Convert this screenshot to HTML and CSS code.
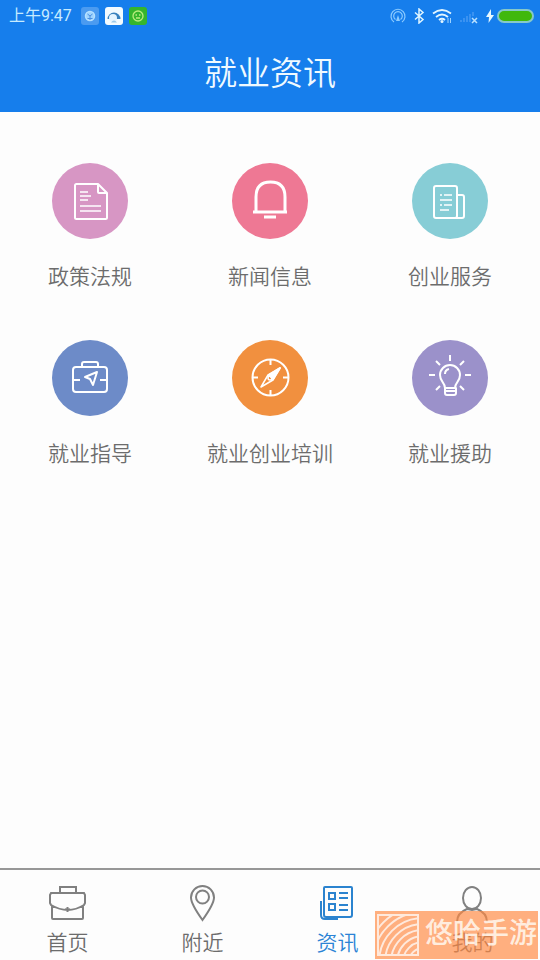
FILE: index.html
```html
<!DOCTYPE html>
<html lang="zh-CN">
<head>
<meta charset="utf-8">
<meta name="viewport" content="width=device-width, initial-scale=1">
<title>就业资讯</title>
<link rel="stylesheet" href="styles.css">
</head>
<body>
<div class="app">
  <header class="top">
    <div class="status">
      <time class="clock">上午9:47</time>
      <div class="notices">
        <svg viewBox="0 0 18 18"><rect width="18" height="18" rx="3" fill="#4b9bf0"/><circle cx="9" cy="9" r="4.500" fill="#9ed4ff" stroke="#b5e0ff" stroke-width="1.500"/><path d="M6.500 7l2.500 2 2.500-2M9 9v4M6.500 11.500h5" fill="none" stroke="#4b8fe0"/></svg>
        <svg viewBox="0 0 18 18"><rect width="18" height="18" rx="3" fill="#f3fbff"/><path d="M2.500 12A6.500 6.500 0 1 1 15.500 12L12 12Z" fill="#3a82bd"/><circle cx="8" cy="11" r="4" fill="#e6f5ff"/><path d="M6 15.500q3-4 6 0" fill="#9cc9e8"/></svg>
        <svg viewBox="0 0 18 18"><rect width="18" height="18" rx="3" fill="#35b52c"/><circle cx="9" cy="9" r="5" fill="none" stroke="#b9ec7c" stroke-width="1.300"/><path d="M6.500 8h1.500M10 8h1.500M7 11h4" stroke="#b9ec7c" stroke-width="1.300"/></svg>
      </div>
      <div class="signals">
        <svg class="cast" viewBox="0 0 16 16"><g fill="none" stroke="#8ccbff" stroke-width="1.200"><path d="M4 14A7 7 0 1 1 12 14"/><path d="M5.500 11.500A4.300 4.300 0 1 1 10.500 11.500"/></g><path d="M8 7l2 6H6z" fill="#8ccbff"/></svg>
        <svg class="bluetooth" viewBox="0 0 12 16"><path d="M2 4.500l8 7L6 15V1l4 3.500-8 7" fill="none" stroke="#dff5ff" stroke-width="1.500"/></svg>
        <svg class="wifi" viewBox="0 0 20 16"><g fill="none" stroke="#e3f6ff" stroke-width="1.800"><path d="M1 5.500Q10-1.500 19 5.500"/><path d="M4 9Q10 4 16 9"/><path d="M7 12Q10 9.500 13 12"/></g><circle cx="10" cy="13.500" r="1.500" fill="#e3f6ff"/><path d="M16 10v5M18.500 10v5" stroke="#9ed3ff"/></svg>
        <svg class="cell" viewBox="0 0 20 16"><path d="M2 14v-2M5 14v-4M8 14V8M11 14V6M14 8V4" stroke="#3a92f1" stroke-width="2"/><path d="M13 10l5 5M18 10l-5 5" stroke="#b8e0ff" stroke-width="1.500"/></svg>
        <svg class="bolt" viewBox="0 0 8 14"><path d="M5 0L0 8h3L2.500 14 8 6H5z" fill="#e7f8ff"/></svg>
        <svg class="battery" viewBox="0 0 37 14"><rect x="1" y="1" width="35" height="12" rx="6" fill="#40b80c" stroke="#86c8c8" stroke-width="2"/></svg>
      </div>
    </div>
    <h1 class="title">就业资讯</h1>
  </header>

  <main class="grid">
    <a class="entry" href="#policy"><span class="disc pink">
      <svg viewBox="0 0 76 76"><path d="M46 21H24.500Q23 21 23 22.500v32Q23 56 24.500 56h29Q55 56 55 54.500V30L46 21v8q0 1 1 1h8"/><path d="M28 29h8M28 33h11M28 37h8M28 43h21M28 48h21" class="fine"/></svg></span><span>政策法规</span></a>
    <a class="entry" href="#news"><span class="disc red">
      <svg viewBox="0 0 76 76"><path class="bold" d="M24 49V34Q24 19 38.500 19T53 34v15M21 49h34M32 54h12"/></svg></span><span>新闻信息</span></a>
    <a class="entry" href="#startup"><span class="disc teal">
      <svg viewBox="0 0 76 76"><rect x="22" y="23" width="23" height="32" rx="2"/><path d="M45 32h5q2 0 2 2v19q0 2-2 2h-7"/><path class="fine" d="M28 32h2M32 32h8M28 37h12M28 42h2M32 42h8M28 47h9"/></svg></span><span>创业服务</span></a>
    <a class="entry" href="#guide"><span class="disc blue">
      <svg viewBox="0 0 76 76"><rect x="21" y="27" width="34" height="25" rx="3"/><path d="M30 27v-3q0-2 2-2h12q2 0 2 2v3M21 40h7M48 40h7M33 37l12-5-4 13-3-6z"/></svg></span><span>就业指导</span></a>
    <a class="entry" href="#training"><span class="disc orange">
      <svg viewBox="0 0 76 76"><circle cx="38.500" cy="37.500" r="18"/><path d="M38.500 20v5M38.500 50v5M21 37.500h5M51 37.500h5"/><path class="fine" d="M48 28L36 35l-7 12 12-7z"/><path class="solid" d="M48 28L37 35l4 4z"/><circle class="fine" cx="38" cy="38" r="2"/></svg></span><span>就业创业培训</span></a>
    <a class="entry" href="#aid"><span class="disc purple">
      <svg viewBox="0 0 76 76"><path d="M33 48c0-6-5-6-5-13a10 10 0 0 1 20 0c0 7-5 7-5 13M33 48h11v5q0 2-2 2h-7q-2 0-2-2zM34 51h9M33 34q0-4 4-5"/><path d="M38 15v6M24 21l4 4M52 21l-4 4M17 35h6M53 35h6M24 50l4-4M52 50l-4-4"/></svg></span><span>就业援助</span></a>
  </main>

  <nav class="tabs">
    <a class="tab" href="#home"><svg viewBox="0 0 40 40"><path d="M3 9h33l1 2v8l-1 2Q20 31 3 21l-1-2v-8zM4 22v12q0 1 1 1h29q1 0 1-1V22M12 9V3h16v6M19.500 23v5M17 25.500h5"/></svg><span>首页</span></a>
    <a class="tab" href="#near"><svg viewBox="0 0 40 40"><path d="M19.500 36Q8 20 8 13.500a11.500 11.500 0 0 1 23 0q0 6.500-11.500 22.500z"/><circle cx="19.500" cy="13" r="6.500"/></svg><span>附近</span></a>
    <a class="tab active" href="#info" aria-current="page"><svg viewBox="0 0 40 40"><path d="M7 3h26q1 0 1 1v27q0 2-2 2H8q-2 0-2-2V4q0-1 1-1zM3 17v14q0 4 4 4h13M11 9h6v6h-6zM11 20h6v6h-6zM21 9h9M21 14h9M21 21h9M21 26h9"/></svg><span>资讯</span></a>
    <a class="tab" href="#me"><svg viewBox="0 0 40 40"><ellipse cx="19" cy="14" rx="9" ry="11"/><path d="M4 38q0-9 10-13l5 1 5-1q10 4 10 13"/></svg><span>我的</span></a>
  </nav>

  <aside class="watermark">
    <svg viewBox="0 0 42 42"><defs><clipPath id="frame"><path d="M1 1h40v40H1z"/></clipPath></defs><g clip-path="url(#frame)"><circle cx="46" cy="48" r="8"/><circle cx="46" cy="48" r="14"/><circle cx="46" cy="48" r="20"/><circle cx="46" cy="48" r="26"/><circle cx="46" cy="48" r="32"/><circle cx="46" cy="48" r="38"/><circle cx="46" cy="48" r="44"/><circle cx="46" cy="48" r="50"/><circle cx="46" cy="48" r="56"/></g><rect x="1" y="1" width="40" height="40"/></svg>
    <span>悠哈手游</span>
  </aside>
</div>
</body>
</html>
```

FILE: styles.css
```css
* {
  box-sizing: border-box;
}

body {
  margin: 0;
  background: #fdfdfd;
  font-family: "Noto Sans CJK SC", sans-serif;
  font-weight: 350;
}

a {
  color: inherit;
  text-decoration: none;
}

svg {
  display: block;
}

.app {
  position: relative;
  display: flex;
  flex-direction: column;
  min-height: 100vh;
}

.top {
  background: #167eec;
  color: #f0faff;
}

.status {
  display: flex;
  align-items: center;
  height: 32px;
  padding: 0 6px 0 9px;
}

.clock {
  color: #c6ebff;
  font-family: Roboto, "Noto Sans CJK SC", sans-serif;
  font-size: 16px;
  font-weight: 400;
  line-height: 32px;
}

.notices {
  display: flex;
  gap: 6px;
  margin-left: 9px;
}

.notices svg {
  width: 18px;
  height: 18px;
}

.signals {
  display: flex;
  align-items: center;
  gap: 7px;
  margin-left: auto;
}

.cast {
  width: 16px;
  height: 16px;
}

.bluetooth {
  width: 12px;
  height: 16px;
}

.wifi,
.cell {
  width: 20px;
  height: 16px;
}

.bolt {
  width: 8px;
  height: 14px;
}

.battery {
  width: 37px;
  height: 14px;
  margin-left: -4px;
}

.title {
  margin: 0;
  padding-bottom: 2px;
  font-size: 33px;
  font-weight: 350;
  line-height: 78px;
  text-align: center;
}

.grid {
  display: grid;
  grid-template-columns: repeat(3, 1fr);
  row-gap: 49px;
  flex: 1;
  align-content: start;
  padding-top: 51px;
}

.entry {
  display: flex;
  flex-direction: column;
  align-items: center;
  gap: 21px;
  color: #6c6c6c;
  font-size: 21px;
  line-height: 31px;
}

.disc {
  width: 76px;
  height: 76px;
  border-radius: 50%;
}

.disc svg {
  fill: none;
  stroke: #fff;
  stroke-width: 2;
  stroke-linejoin: round;
}

.disc .fine {
  stroke-width: 1.5;
}

.disc .bold {
  stroke-width: 3;
}

.disc .solid {
  fill: #fff;
}

.pink { background: #d796c4; }
.red { background: #ee7894; }
.teal { background: #87cdd6; }
.blue { background: #6d8bc8; }
.orange { background: #f1903f; }
.purple { background: #9b91ca; }

.tabs {
  display: grid;
  grid-template-columns: repeat(4, 1fr);
  height: 92px;
  padding-top: 14px;
  border-top: 2px solid #979797;
}

.tab {
  display: flex;
  flex-direction: column;
  align-items: center;
  color: #6c6c6c;
  font-size: 21px;
  line-height: 34px;
}

.tab svg {
  width: 40px;
  height: 40px;
  fill: none;
  stroke: #808080;
  stroke-width: 2;
}

.active {
  color: #2b83d5;
}

.active svg {
  stroke: #2b83cf;
}

.watermark {
  position: absolute;
  right: 2px;
  bottom: 1px;
  display: flex;
  align-items: center;
  gap: 6px;
  height: 48px;
  padding: 0 1px 0 2px;
  background: rgba(255, 137, 66, 0.68);
  color: rgba(255, 246, 236, 0.9);
  font-size: 28px;
  font-weight: 500;
  line-height: 36px;
  pointer-events: none;
}

.watermark span {
  padding-bottom: 8px;
}

.watermark svg {
  width: 42px;
  height: 42px;
  fill: none;
  stroke: #ffe9dc;
  stroke-width: 2;
}
```
